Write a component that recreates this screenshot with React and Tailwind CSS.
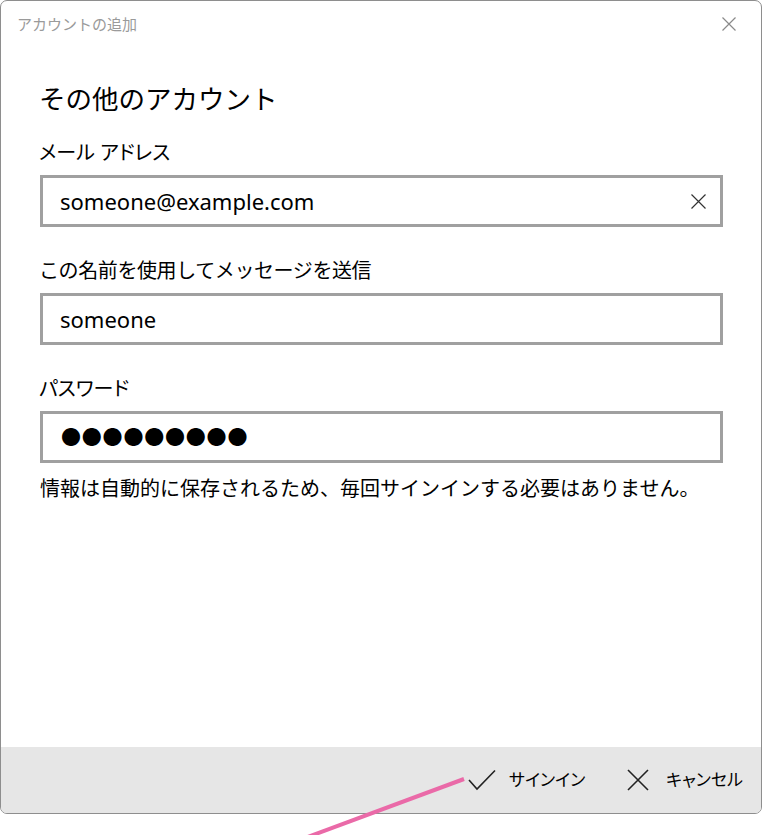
export default function App() {
  return (
    <div className="relative w-[762px] h-[835px] bg-white overflow-hidden font-['Noto_Sans','Noto_Sans_CJK_JP',sans-serif] text-black">
      <div className="flex flex-col w-[762px] h-[814px] border border-[#8e8e8e] rounded-[7px] overflow-hidden bg-white">
        <div className="flex items-center justify-between h-[45px] shrink-0 pl-[16px] pr-[25px]">
          <span className="text-[15px] text-[#9a9a9a] leading-[20px]">アカウントの追加</span>
          <svg width="14" height="14" viewBox="0 0 14 14" className="block">
            <path d="M0.5 0.5 L13.5 13.5 M13.5 0.5 L0.5 13.5" stroke="#8a8a8a" strokeWidth="1.2" fill="none" />
          </svg>
        </div>
        <div className="flex-1 flex flex-col pl-[38px] pr-[38px]">
          <h1 className="mt-[35px] text-[26.5px] leading-[36px] font-normal">その他のアカウント</h1>
          <label className="mt-[22px] text-[20px] leading-[28px] [font-feature-settings:'palt']">メール アドレス</label>
          <div className="ml-[1px] mt-[8px] h-[52px] border-[3px] border-[#a0a0a0] flex items-center pl-[17px] pr-[14px]">
            <span className="flex-1 text-[22px] leading-[28px]">someone@example.com</span>
            <svg width="15" height="15" viewBox="0 0 15 15" className="block">
              <path d="M0.5 0.5 L14.5 14.5 M14.5 0.5 L0.5 14.5" stroke="#333" strokeWidth="1.2" fill="none" />
            </svg>
          </div>
          <label className="mt-[30px] text-[20px] leading-[28px] tracking-[-0.4px]">この名前を使用してメッセージを送信</label>
          <div className="ml-[1px] mt-[8px] h-[52px] border-[3px] border-[#a0a0a0] flex items-center pl-[17px]">
            <span className="text-[22px] leading-[28px]">someone</span>
          </div>
          <label className="mt-[30px] text-[20px] leading-[28px] [font-feature-settings:'palt']">パスワード</label>
          <div className="ml-[1px] mt-[8px] h-[52px] border-[3px] border-[#a0a0a0] flex items-center pl-[18px]">
            <span className="text-[20px] font-['Noto_Sans_CJK_JP',sans-serif] tracking-[0.8px]">●●●●●●●●●</span>
          </div>
          <p className="ml-[1px] mt-[12px] text-[20px] leading-[28px]">情報は自動的に保存されるため、毎回サインインする必要はありません。</p>
        </div>
        <div className="h-[66px] shrink-0 bg-[#e6e6e6] flex items-center justify-end pr-[20px]">
          <div className="flex items-center">
            <svg width="28" height="22" viewBox="0 0 28 22" className="block">
              <path d="M1 11 L9 20 L27 1.5" stroke="#222" strokeWidth="1.6" fill="none" />
            </svg>
            <span className="ml-[13px] w-[75px] text-[17px] leading-[22px] [font-feature-settings:'palt'] whitespace-nowrap">サインイン</span>
          </div>
          <div className="flex items-center ml-[43px]">
            <svg width="22" height="22" viewBox="0 0 22 22" className="block">
              <path d="M1 1 L21 21 M21 1 L1 21" stroke="#222" strokeWidth="1.6" fill="none" />
            </svg>
            <span className="ml-[17px] w-[75px] text-[17px] leading-[22px] [font-feature-settings:'palt'] whitespace-nowrap">キャンセル</span>
          </div>
        </div>
      </div>
      <svg className="absolute left-0 top-0 pointer-events-none" width="762" height="835" viewBox="0 0 762 835">
        <line x1="305" y1="838" x2="464" y2="779" stroke="#ea6aa8" strokeWidth="4" />
      </svg>
    </div>
  );
}
